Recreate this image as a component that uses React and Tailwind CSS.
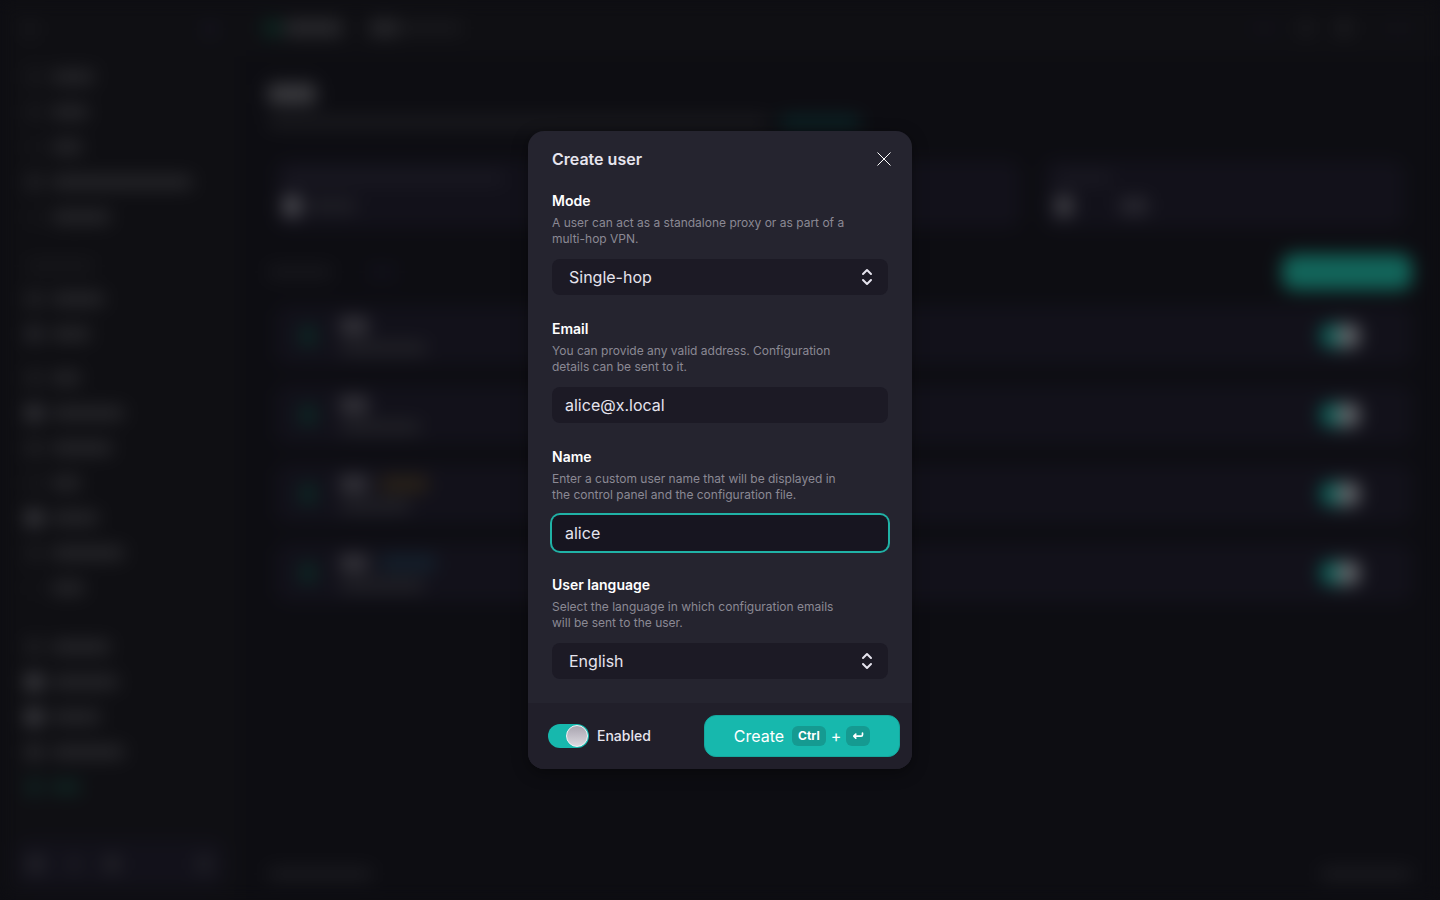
import { useState } from "react";

const NAV_GROUPS = [
  {
    space: "",
    items: [
      { width: 42, icon: "bg-[#19191d]" },
      { width: 36, icon: "bg-[#19191d]" },
      { width: 30, icon: "bg-[#151519]" },
      { width: 140, icon: "bg-[#222226]" },
      { width: 58, icon: "bg-[#141418]" },
    ],
  },
  {
    space: "mt-[26px]",
    heading: true,
    items: [
      { width: 52, icon: "bg-[#232327]" },
      { width: 38, icon: "bg-[#2a2a2f]" },
    ],
  },
  {
    space: "mt-[9px]",
    items: [
      { width: 28, icon: "bg-[#1f1f23]" },
      { width: 72, icon: "bg-[#3a3a3f]" },
      { width: 60, icon: "bg-[#212125]" },
      { width: 28, icon: "bg-[#17171b]" },
      { width: 46, icon: "bg-[#404045]" },
      { width: 72, icon: "bg-[#1c1c20]" },
      { width: 32, icon: "bg-[#121216]" },
    ],
  },
  {
    space: "mt-6",
    items: [
      { width: 58, icon: "bg-[#202024]" },
      { width: 66, icon: "bg-[#46464b]" },
      { width: 48, icon: "bg-[#46464b]" },
      { width: 72, icon: "bg-[#2a2a2e]" },
      { width: 28, icon: "bg-[#0f2422]", active: true },
    ],
  },
];

const USERS = [
  { mail: 86 },
  { mail: 80 },
  { mail: 70, tag: "w-12 bg-[#2a2218]" },
  { mail: 84, tag: "w-14 bg-[#14202c]" },
];

function Bar({ className = "", width }) {
  return (
    <span
      className={`block shrink-0 rounded-sm ${className}`}
      style={width ? { width } : undefined}
    />
  );
}

function Sidebar() {
  return (
    <aside className="flex w-60 shrink-0 flex-col bg-[#0f0f13]">
      <div className="mx-4 flex h-[59px] items-center justify-between border-b border-[#131317] px-2">
        <Bar className="h-4 w-3 bg-[#19191d]" />
        <Bar className="h-3 w-3 bg-[#171624]" />
      </div>

      {NAV_GROUPS.map((group, index) => (
        <div key={index} className={`px-[26px] ${group.space}`}>
          {group.heading && <Bar className="mb-[9px] h-3 w-[68px] bg-[#17171b]" />}
          {group.items.map((item, row) => (
            <div key={row} className="flex h-[35px] items-center gap-[10px]">
              <Bar className={`h-4 w-4 ${item.icon}`} />
              <Bar
                className={`h-3 ${item.active ? "bg-[#0f2824]" : "bg-[#29292d]"}`}
                width={item.width}
              />
            </div>
          ))}
        </div>
      ))}

      <div className="mx-4 mt-auto mb-3 flex h-12 items-center gap-6 rounded-xl bg-[#12111a] px-3">
        <Bar className="h-4 w-4 bg-[#26262c]" />
        <Bar className="h-3 w-3 bg-[#202026]" />
        <Bar className="h-4 w-4 bg-[#242429]" />
        <Bar className="ml-auto h-4 w-4 bg-[#202026]" />
      </div>
    </aside>
  );
}

function UserRow({ user }) {
  return (
    <div className="flex h-[59px] items-center rounded-xl bg-[#12111a] px-6">
      <Bar className="h-5 w-4 bg-[#0c2925]" />
      <div className="ml-6 flex flex-col gap-2">
        <div className="flex gap-3">
          <Bar className="h-4 w-7 bg-[#38373d]" />
          {user.tag && <Bar className={`h-4 ${user.tag}`} />}
        </div>
        <Bar className="h-3 bg-[#222227]" width={user.mail} />
      </div>
      <div className="mr-7 ml-auto flex h-6 w-10 justify-end rounded-full bg-[#0d665c] p-px">
        <Bar className="h-[22px] w-[22px] rounded-full bg-[#66666b]" />
      </div>
    </div>
  );
}

function Dashboard() {
  return (
    <div
      aria-hidden="true"
      className="flex min-h-screen overflow-hidden bg-[#0d0d12] blur-[9px]"
    >
      <Sidebar />
      <div className="flex flex-1 flex-col">
        <header className="flex h-14 items-center bg-[#0f0f13] px-6">
          <Bar className="h-4 w-4 bg-[#0a2a22]" />
          <Bar className="ml-1 h-4 w-[58px] bg-[#2a2a2e]" />
          <Bar className="ml-7 h-4 w-7 bg-[#28282c]" />
          <Bar className="h-3 w-16 bg-[#19191d]" />
          <div className="mr-3 ml-auto flex items-center gap-6">
            <Bar className="h-2 w-6 bg-[#12111c]" />
            <Bar className="h-4 w-3 bg-[#1b1b1f]" />
            <Bar className="h-4 w-4 bg-[#1c1c20]" />
            <Bar className="ml-4 h-4 w-3 bg-[#12111a]" />
          </div>
        </header>

        <main className="flex flex-1 flex-col px-7 pt-7">
          <Bar className="h-5 w-12 bg-[#3c3c40]" />
          <div className="mt-3 flex gap-3">
            <Bar className="h-3 w-[500px] bg-[#1b1b1f]" />
            <Bar className="h-3 w-20 bg-[#0b2729]" />
          </div>

          <div className="mt-8 grid grid-cols-3 gap-6 px-2">
            <div className="col-span-2 flex h-[68px] flex-col justify-center gap-3 rounded-xl bg-[#12111a] px-2">
              <Bar className="h-3 w-[220px] bg-[#1a1922]" />
              <div className="flex items-center gap-2">
                <Bar className="h-5 w-4 bg-[#55555a]" />
                <Bar className="h-3 w-12 bg-[#212127]" />
              </div>
            </div>
            <div className="flex h-[68px] flex-col justify-center gap-3 rounded-xl bg-[#12111a] px-3">
              <Bar className="h-3 w-14 bg-[#1a1922]" />
              <div className="flex items-center gap-12">
                <Bar className="h-5 w-4 bg-[#47474c]" />
                <Bar className="h-4 w-7 bg-[#2a2931]" />
              </div>
            </div>
          </div>

          <div className="mt-6 flex h-10 items-center gap-9">
            <Bar className="h-3 w-16 bg-[#18181d]" />
            <Bar className="h-3 w-7 bg-[#12111c]" />
            <Bar className="ml-auto h-9 w-[130px] rounded-xl bg-[#12655a]" />
          </div>

          <div className="mt-[14px] flex flex-col gap-5 pl-2">
            {USERS.map((user, index) => (
              <UserRow key={index} user={user} />
            ))}
          </div>

          <footer className="mt-auto mb-5 flex justify-between">
            <Bar className="h-3 w-[104px] bg-[#1b1b20]" />
            <Bar className="h-3 w-[92px] bg-[#1b1b20]" />
          </footer>
        </main>
      </div>
    </div>
  );
}

function Field({ id, label, hint, children }) {
  return (
    <div>
      <label
        htmlFor={id}
        className="block text-sm leading-5 font-semibold text-white"
      >
        {label}
      </label>
      <p className="mt-1 mb-3 pr-9 text-xs leading-4 text-[#8b8994]">{hint}</p>
      {children}
    </div>
  );
}

function SelectField({ id, label, hint, options }) {
  return (
    <Field id={id} label={label} hint={hint}>
      <div className="relative">
        <select
          id={id}
          className="h-9 w-full appearance-none rounded-lg bg-[#1c1a25] pr-10 pl-[17px] text-base text-[#e6e4ee] outline-none"
        >
          {options.map((option) => (
            <option key={option}>{option}</option>
          ))}
        </select>
        <svg
          viewBox="0 0 12 18"
          className="pointer-events-none absolute top-[9px] right-[15px] h-[18px] w-3"
          fill="none"
          stroke="#e6e4ee"
          strokeWidth="2"
          strokeLinecap="round"
          strokeLinejoin="round"
        >
          <path d="M2 6l4-4 4 4M2 12l4 4 4-4" />
        </svg>
      </div>
    </Field>
  );
}

function TextField({ id, label, hint, value, onChange, active }) {
  return (
    <Field id={id} label={label} hint={hint}>
      <input
        id={id}
        type="text"
        value={value}
        onChange={(event) => onChange(event.target.value)}
        className={`block h-9 w-full rounded-lg px-[13px] text-base text-[#e6e4ee] outline-none ${
          active ? "bg-[#171520] ring-2 ring-[#20b2a6]" : "bg-[#1c1a25]"
        }`}
      />
    </Field>
  );
}

export default function App() {
  const [email, setEmail] = useState("alice@x.local");
  const [name, setName] = useState("alice");
  const [enabled, setEnabled] = useState(true);

  return (
    <div className="relative min-h-screen overflow-hidden bg-[#0d0d12] font-['Inter',sans-serif]">
      <Dashboard />

      <div className="absolute inset-0 flex items-center justify-center">
        <form
          role="dialog"
          aria-labelledby="dialog-title"
          onSubmit={(event) => event.preventDefault()}
          className="w-96 overflow-hidden rounded-2xl bg-[#25242f] shadow-[0_4px_16px_rgba(0,0,0,0.4)]"
        >
          <div className="flex h-[60px] items-start justify-between px-6 pt-4">
            <h2
              id="dialog-title"
              className="text-base leading-6 font-semibold text-[#e6e4ee]"
            >
              Create user
            </h2>
            <button
              type="button"
              aria-label="Close"
              className="-mr-2 flex h-6 w-6 items-center justify-center"
            >
              <svg
                viewBox="0 0 14 14"
                className="h-[14px] w-[14px]"
                fill="none"
                stroke="#fff"
                strokeWidth="1"
              >
                <path d="M.5.5l13 13M13.5.5l-13 13" />
              </svg>
            </button>
          </div>

          <div className="flex flex-col gap-6 px-6 pb-6">
            <SelectField
              id="mode"
              label="Mode"
              hint="A user can act as a standalone proxy or as part of a multi-hop VPN."
              options={["Single-hop"]}
            />
            <TextField
              id="email"
              label="Email"
              hint="You can provide any valid address. Configuration details can be sent to it."
              value={email}
              onChange={setEmail}
            />
            <TextField
              id="name"
              label="Name"
              hint="Enter a custom user name that will be displayed in the control panel and the configuration file."
              value={name}
              onChange={setName}
              active
            />
            <SelectField
              id="language"
              label="User language"
              hint="Select the language in which configuration emails will be sent to the user."
              options={["English"]}
            />
          </div>

          <div className="flex items-center justify-between bg-[#211f2a] py-3 pr-3 pl-5">
            <label className="flex items-center gap-2 text-sm font-medium text-[#e6e4ee]">
              <span className="relative flex h-6 w-[41px]">
                <input
                  type="checkbox"
                  role="switch"
                  checked={enabled}
                  onChange={(event) => setEnabled(event.target.checked)}
                  className="h-6 w-full appearance-none rounded-full bg-[#55535f] checked:bg-[#17b8ad]"
                />
                <span
                  className={`pointer-events-none absolute top-px h-[22px] w-[22px] rounded-full border border-[#f4f2f6] bg-linear-to-b from-[#a9a5b0] to-[#dcd9e0] ${
                    enabled ? "right-px" : "left-px"
                  }`}
                />
              </span>
              Enabled
            </label>

            <button
              type="submit"
              className="flex h-[42px] w-[196px] items-center justify-center rounded-xl border border-[#15a79d] bg-[#17b8ad] text-base text-white"
            >
              Create
              <kbd className="ml-2 flex h-5 items-center rounded-md bg-[#159a91] px-[6px] font-['Inter',sans-serif] text-xs font-bold">
                Ctrl
              </kbd>
              <span className="mx-[5px] text-base">+</span>
              <kbd className="flex h-5 w-6 items-center justify-center rounded-md bg-[#159a91]">
                <svg
                  viewBox="0 0 12 10"
                  className="h-[10px] w-3"
                  fill="none"
                  stroke="#fff"
                  strokeWidth="1.7"
                  strokeLinecap="round"
                  strokeLinejoin="round"
                >
                  <path d="M10.5 2.2v1.6a1.4 1.4 0 0 1-1.4 1.4H2M3.8 3.2L1.8 5.2l2 2" />
                </svg>
              </kbd>
            </button>
          </div>
        </form>
      </div>
    </div>
  );
}
